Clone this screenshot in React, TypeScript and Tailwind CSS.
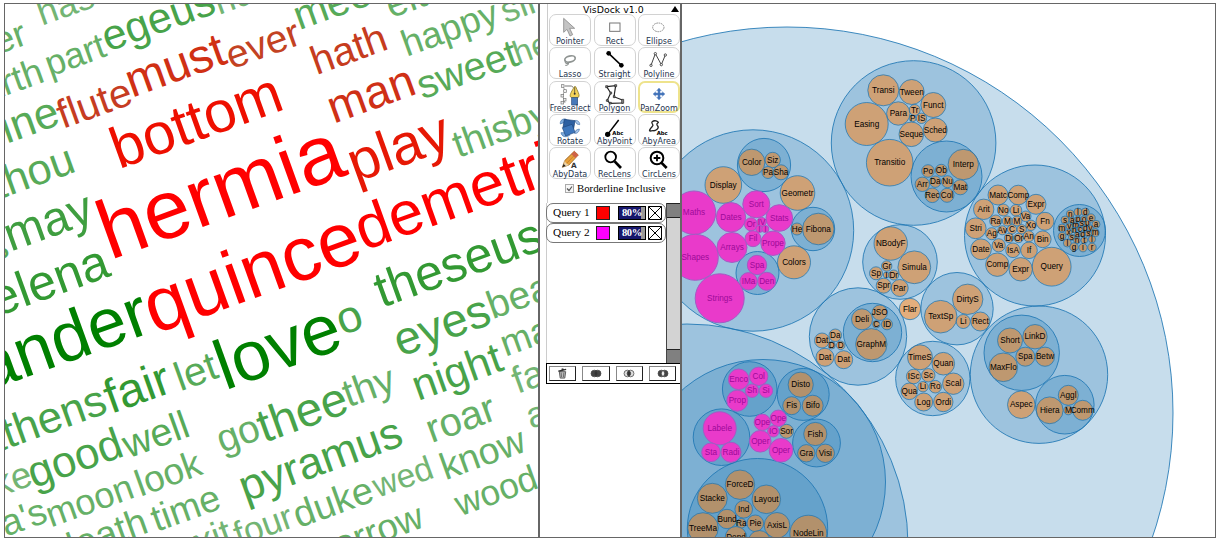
import React from "react";

type Word = [text: string, x: number, y: number, size: number, fill: string];

const R0 = "#ff0000";
const G0 = "#008000";
const G1 = "#339933";
const G2 = "#48a34a";
const G3 = "#57aa58";
const G4 = "#66b067";
const G5 = "#73b574";

const WORDS: Word[] = [
  ["er", -1.8, 54.6, 37, G4],
  ["has", 42.1, 25.8, 36, G5],
  ["earth", -33.3, 109.8, 37, G4],
  ["part", 49.9, 76.7, 36, G4],
  ["egeus", 107.8, 52.1, 43, G2],
  ["nu", 219, 15, 36, G5],
  ["flute", 62.8, 129, 40.5, "#c63c22"],
  ["must", 132, 97.8, 47.6, "#d03014"],
  ["ever", 231.6, 69.4, 39, "#c34222"],
  ["meet", 299.2, 30.2, 41, G3],
  ["either", 391, 18.3, 38, G4],
  ["hath", 316.5, 75.2, 40.1, "#c63c1e"],
  ["happy", 406.7, 56.8, 36.7, G4],
  ["sing", 505.5, 23.2, 36, G5],
  ["sweet", 422.6, 99.6, 39.8, G3],
  ["hear", 517.7, 64.8, 33, G5],
  ["bottom", 119.1, 169.2, 58.2, "#ee0f00"],
  ["man", 333.8, 123.8, 46.2, "#cf3016"],
  ["play", 355.6, 182.7, 57, "#e61805"],
  ["thisby", 458.3, 158, 38.5, G4],
  ["line", -2.5, 147, 44, G3],
  ["thou", -1.6, 199.6, 43.2, G3],
  ["s", -6, 262, 36, G3],
  ["may", 10.6, 251.8, 48.2, "#3f9e40"],
  ["hermia", 110, 260.3, 83.3, R0],
  ["helena", -28.8, 326.2, 50, G1],
  ["ander", -13.3, 391.5, 69.5, G0],
  ["quince", 154.3, 334.4, 76.5, R0],
  ["demetrius", 363.6, 251, 62, R0],
  ["theseus", 381.7, 308, 50, G1],
  ["fair", 111, 414.1, 48, G1],
  ["athens", -14.8, 456.8, 44, G2],
  ["let", 180.2, 391.5, 40.5, G3],
  ["love", 224.9, 390.6, 70.2, G0],
  ["o", 342.3, 335.5, 45, G2],
  ["eyes", 400.2, 356.9, 47, G2],
  ["bear", 492.6, 319.2, 39, G4],
  ["good", 33.8, 488.6, 44, G2],
  ["like", -17.6, 503.1, 37, G5],
  ["well", 128.3, 458.4, 39.3, G3],
  ["go", 221.9, 453.1, 39, G4],
  ["thee", 264, 442.9, 47.5, G2],
  ["thy", 348.3, 407.6, 39.5, G4],
  ["night", 418, 401, 42.8, G2],
  ["make", 505.4, 356.8, 37, G4],
  ["father", 517.6, 394, 38, G5],
  ["as", 531, 429, 36, G5],
  ["roar", 431.5, 443.2, 40, G4],
  ["pyramus", 245.2, 502.2, 44.4, G2],
  ["duke", 298.5, 528.3, 38, G4],
  ["four", 238.8, 546.7, 35, G5],
  ["wed", 377.5, 498, 33.7, G5],
  ["know", 445.4, 480.2, 37.6, G4],
  ["wood", 460, 516.4, 35.7, G4],
  ["morrow", 309.9, 568.2, 37, G4],
  ["moon", 51, 527.5, 36.2, G4],
  ["look", 140.4, 496.8, 37, G4],
  ["a's", 6, 536.8, 37, G4],
  ["time", 156.5, 532, 37.5, G4],
  ["death", 60.7, 564, 38, G4],
  ["exit", 179, 563, 38, G5],
];

function WordCloud() {
  return (
    <svg width="533" height="533" viewBox="5 4 533 533" className="block font-['Liberation_Sans',sans-serif]">
      {WORDS.map(([text, x, y, size, fill], i) => (
        <text key={i} transform={`translate(${x} ${y}) rotate(-19.8)`} fontSize={size} fill={fill}>
          {text}
        </text>
      ))}
    </svg>
  );
}

type Ring = [x: number, y: number, r: number];
type Leaf = [label: string, x: number, y: number, r: number];

const RINGS: Ring[] = [
  [787, 413, 386],
  [753, 230.5, 100.7],
  [687, 545, 221],
  [763, 482, 122.5],
  [913.6, 143, 82.3],
  [946.5, 176.5, 35.5],
  [1035, 235.5, 70.5],
  [1079.5, 230.5, 26],
  [900, 262, 37.3],
  [957, 308.7, 36.2],
  [858, 336.5, 48.7],
  [872.5, 332.5, 29.2],
  [932.8, 378.5, 37.2],
  [1039, 374.7, 68.7],
  [1021.7, 352.8, 37.7],
  [1064.8, 404.7, 29.3],
  [764, 165, 26.6],
  [813, 229, 21.7],
  [757.5, 273, 21.5],
  [749.7, 389, 27.3],
  [803.2, 394.4, 26],
  [721.5, 437.2, 28.3],
  [816.5, 443, 23.9],
  [757.5, 528.7, 70.2],
];

const LEAVES: Leaf[] = [
  ["Color", 751.7, 162.3, 13.2], ["Siz", 772.7, 160, 7.7], ["Pa", 768, 172.5, 6], ["Sha", 781, 172.3, 7.5],
  ["Display", 723.3, 185, 18.3], ["Geometr", 797.5, 193, 17.3], ["He", 797, 229, 6], ["Fibona", 818.3, 229, 15.8],
  ["Colors", 794, 262.3, 16.5], ["Disto", 800.7, 384.7, 12.6], ["Fis", 791.7, 405.7, 9], ["Bifo", 812.7, 405.7, 10.5],
  ["Sor", 786.5, 431.3, 7], ["Fish", 815.3, 434, 11.6], ["Gra", 806.3, 453.3, 8.7], ["Visi", 825.3, 453.3, 9.2],
  ["ForceD", 740, 484.7, 14.7], ["Stacke", 712.3, 498.3, 15], ["Layout", 766.3, 499.3, 14.3], ["Ind", 743.7, 509.3, 8.8],
  ["TreeMa", 703, 528, 15.3], ["Bund", 727, 519, 9.7], ["Ra", 741.3, 523.3, 4.8], ["Pie", 755.3, 523.3, 8.3],
  ["AxisL", 777, 525.3, 12.8], ["NodeLin", 808.3, 533.7, 18.5], ["Dend", 736, 537.3, 10.8], ["", 759.3, 541.5, 11],
  ["Transi", 883.3, 90.3, 15.5], ["Tween", 911.7, 92, 12.5], ["Funct", 933.3, 105, 12.5], ["Para", 898.3, 113.5, 11.7],
  ["Tr", 914.7, 110, 5.5], ["P", 912.7, 118.5, 3.3], ["IS", 921.5, 118.3, 5.2], ["Easing", 866.7, 124, 21.5],
  ["Seque", 911.3, 134.3, 12.3], ["Sched", 935.3, 130, 12], ["Transitio", 889.7, 162.7, 23.3], ["Interp", 963.3, 164.5, 15.2],
  ["Po", 928, 171, 6.3], ["Ob", 941.3, 170.3, 6], ["Arr", 922.3, 184.3, 7.2], ["Da", 935.3, 181.7, 5.7],
  ["Nu", 947.5, 181.7, 6], ["Mat", 960.3, 187.3, 7.5], ["Rec", 932.3, 195.3, 7.3], ["Col", 947, 195.3, 7],
  ["NBodyF", 890.7, 243.5, 16.7], ["Simula", 914.3, 267.3, 16.4], ["Gr", 886.7, 266, 5.2], ["Sp", 876, 273.3, 6.5],
  ["I", 886.3, 275, 3], ["Dr", 893.7, 275, 5], ["Spr", 883.7, 285.7, 7.5], ["Par", 899.7, 288, 8.5],
  ["Flar", 910, 309, 10.7], ["DirtyS", 967.7, 299.3, 15.2], ["TextSp", 940.7, 316.7, 16.3], ["Li", 963.3, 321.5, 7],
  ["Rect", 980.3, 321.5, 9.5], ["Deli", 862, 319.3, 10.5], ["JSO", 879.7, 312.7, 7.7], ["C", 876.3, 324.3, 3.7],
  ["ID", 887, 324.3, 5.5], ["GraphM", 871.3, 344.3, 15.7], ["Dat", 822, 340.5, 7.5], ["Da", 835.3, 335.3, 6.3],
  ["D", 831.7, 345.3, 3.7], ["D", 840.7, 345.3, 4.3], ["Dat", 825, 357.3, 9], ["Dat", 843.7, 359.7, 9],
  ["TimeS", 920, 357.3, 12.5], ["Quan", 943.3, 363.7, 11.3], ["ISc", 913.7, 376.5, 7.3], ["Sc", 928.3, 375.3, 6.7],
  ["Scal", 953.3, 383.7, 10.7], ["Li", 923, 386.7, 5.2], ["Ro", 935.3, 386.7, 6.3], ["Qua", 909.3, 391.3, 8.3],
  ["Log", 923.7, 402, 9], ["Ordi", 943.3, 402, 9.7],
  ["Matc", 998, 195, 10], ["Comp", 1018.3, 195, 9.8], ["Expr", 1036, 204.3, 10], ["Arit", 983.7, 209.3, 10.2],
  ["No", 1003.3, 210, 6], ["Li", 1016, 210.3, 5.8], ["Va", 1025.7, 216.3, 5.3], ["Fn", 1045, 221.3, 9],
  ["Ra", 995.7, 221, 6], ["M", 1007.3, 221, 5], ["M", 1017, 221, 5], ["Xo", 1031, 225.3, 5.2],
  ["Stri", 975.7, 228.3, 10.4], ["Ag", 991.7, 233.7, 6], ["Av", 1002.3, 230.3, 4.5], ["C", 1012, 229.3, 4.7],
  ["S", 1021.7, 229.3, 4.7], ["Di", 1009, 238, 4.7], ["Or", 1018.7, 238, 4.7], ["An", 1028.7, 236.3, 5.5],
  ["Bin", 1042.7, 239.3, 8.4], ["Date", 981, 249.3, 10.4], ["Va", 998.7, 245.3, 6.6], ["IsA", 1013, 250.3, 7.3],
  ["If", 1029, 250.3, 8.3], ["Comp", 997.3, 264.7, 11.7], ["Expr", 1020.7, 269.3, 11.7], ["Query", 1051.7, 266.7, 19.4],
  ["n", 1070.3, 214, 4], ["l", 1078, 212, 4], ["d", 1085.3, 212, 4], ["s", 1065, 220, 4],
  ["a", 1072.3, 220.3, 3.2], ["p", 1078, 219, 3], ["o", 1084, 219, 3.2], ["e", 1091, 218, 4.2],
  ["m", 1062, 228, 4], ["v", 1069.3, 226.3, 3.2], ["m", 1075.7, 225, 2.8], ["s", 1081.7, 223.7, 2.8],
  ["u", 1087.3, 223.3, 3], ["a", 1096, 224.3, 4], ["x", 1068.7, 232.3, 3.2], ["n", 1074.3, 230, 2.6],
  ["c", 1080, 229, 2.6], ["d", 1085.3, 228.3, 2.8], ["y", 1090.3, 228, 3], ["m", 1095.3, 232.7, 4],
  ["g", 1062, 236.3, 4], ["s", 1071.7, 237.3, 3.2], ["a", 1077.3, 234.7, 2.8], ["d", 1082.7, 234.3, 2.8],
  ["s", 1088.3, 233.7, 3.2], ["l", 1067.3, 243, 4], ["n", 1077, 240.3, 3.4], ["t", 1084.3, 240.3, 3.4],
  ["l", 1092, 239.3, 3.6], ["g", 1074, 247, 4.2], ["i", 1083, 247.7, 4.2], ["r", 1092, 247.3, 4.2],
  ["Short", 1010, 340.5, 12.5], ["LinkD", 1035, 336.7, 12.2], ["Spa", 1025.3, 356.7, 9.5], ["Betw", 1045, 356.7, 9.6],
  ["MaxFlo", 1003.3, 367.3, 14.3], ["Aspec", 1021.3, 404.7, 13.8], ["Aggl", 1068.3, 395.3, 10],
  ["Hiera", 1049.7, 410.3, 13.4], ["M", 1068.3, 410.3, 4.5], ["Comm", 1082.7, 410.3, 10],
];

const SELECTED: Leaf[] = [
  ["Maths", 694, 212.7, 21.7], ["Dates", 731, 217.3, 14.7], ["Sort", 756.3, 204.3, 13.5], ["Stats", 779.3, 218, 13.3],
  ["Or", 751, 224.3, 6.5], ["IV", 761.7, 222, 4.6], ["I", 759.3, 229, 3.6], ["I", 765.3, 229, 3.6],
  ["Fil", 753, 238.7, 8], ["Prope", 773, 243.3, 12.2], ["Arrays", 732, 247.5, 15], ["Shapes", 695.3, 257.3, 23],
  ["Strings", 719.7, 298.3, 24.5], ["Spa", 757, 265, 9.7], ["IMa", 748.5, 281.3, 8.7], ["Den", 766.7, 281.3, 9],
  ["Enco", 738.7, 379.3, 10.3], ["Col", 758.7, 376.3, 9.2], ["Sh", 752, 390.7, 6.7], ["Si", 766, 390.7, 6.7],
  ["Prop", 737.3, 400.7, 10.5], ["Labele", 719.7, 428.3, 16.5], ["Sta", 711, 452.3, 9.3], ["Radi", 731, 452.3, 10],
  ["Ope", 762.3, 422.3, 8.2], ["Ope", 778.3, 418.3, 8.2], ["IO", 773.3, 431.3, 5.7], ["Oper", 760.3, 441.3, 10.8],
  ["Oper", 781, 450.3, 11.8],
];

function CirclePack() {
  return (
    <svg
      width="533"
      height="533"
      viewBox="682 4 533 533"
      className="block font-['Liberation_Sans',sans-serif] text-[8.2px]"
      textAnchor="middle"
    >
      <g fill="#1f77b4" fillOpacity="0.25" stroke="#1f77b4" strokeOpacity="0.85">
        {RINGS.map(([x, y, r], i) => (
          <circle key={i} cx={x} cy={y} r={r} />
        ))}
      </g>
      {LEAVES.map(([label, x, y, r], i) => (
        <g key={i}>
          <circle cx={x} cy={y} r={r} fill="#ff7f0e" fillOpacity="0.5" stroke="#1f77b4" strokeOpacity="0.75" />
          <text x={x} y={y + 2.7}>{label}</text>
        </g>
      ))}
      {SELECTED.map(([label, x, y, r], i) => (
        <g key={i}>
          <circle cx={x} cy={y} r={r} fill="#e93aca" stroke="#a45ac4" />
          <text x={x} y={y + 2.7} fill="#9c0a98">{label}</text>
        </g>
      ))}
    </svg>
  );
}

/* Tool glyphs share a 126 x 84 canvas, three units to the pixel. */
const ICONS: Record<string, React.ReactNode> = {
  Pointer: (
    <path d="M44 13v42l10-9 9 20 8-4-9-19h15z" fill="#c4c4c4" stroke="#8d8d8d" strokeWidth="2.5" />
  ),
  Rect: <rect x="47" y="27" width="31" height="25" fill="#fff" stroke="#777" strokeWidth="3" />,
  Ellipse: <ellipse cx="61" cy="40" rx="17" ry="13" fill="#fff" stroke="#777" strokeWidth="2.5" strokeDasharray="5 2" />,
  Lasso: (
    <g fill="none" stroke="#8f9492">
      <ellipse cx="63" cy="36" rx="16" ry="9" strokeWidth="5" transform="rotate(-14 63 36)" />
      <path d="M49 42c-2 8 6 9 10 5 0 6-6 9-10 8" strokeWidth="3.5" />
    </g>
  ),
  Straight: (
    <g>
      <path d="M44 19L82 55" stroke="#000" strokeWidth="4.5" />
      <circle cx="44" cy="19" r="7" />
      <circle cx="82" cy="55" r="7" />
    </g>
  ),
  Polyline: (
    <g fill="#fff" stroke="#333" strokeWidth="2.5">
      <path d="M39 55L52 20L70 53L82 24" fill="none" stroke="#444" strokeWidth="3" />
      <circle cx="39" cy="55" r="3.5" />
      <circle cx="52" cy="20" r="3.5" />
      <circle cx="70" cy="53" r="3.5" />
      <circle cx="82" cy="24" r="3.5" />
    </g>
  ),
  Freeselect: (
    <g>
      <path d="M41 15L49 30L40 42L48 66" fill="none" stroke="#777" strokeWidth="2" />
      <g fill="#eee" stroke="#777" strokeWidth="2">
        <rect x="37" y="11" width="8" height="8" />
        <rect x="44" y="26" width="8" height="8" />
        <rect x="36" y="40" width="8" height="8" />
        <rect x="43" y="52" width="8" height="8" />
        <rect x="36" y="61" width="8" height="8" />
      </g>
      <path d="M47 15h20l6 4" fill="none" stroke="#777" strokeWidth="3" />
      <path d="M76 17c-7 13-14 22-12 30l6 4h14l6-4c2-8-5-17-10-30z" fill="#f2d259" stroke="#8b7828" strokeWidth="2.5" />
      <path d="M77 19v18" stroke="#333" strokeWidth="2" />
      <circle cx="77" cy="38" r="3" fill="#333" />
      <rect x="68" y="50" width="18" height="22" fill="#4779b9" stroke="#294c7c" strokeWidth="2" />
    </g>
  ),
  Polygon: (
    <g fill="none" stroke="#222" strokeWidth="3.5">
      <path d="M38 17L65 14L60 47L85 57M38 17L50 36L40 58L48 67L87 66" />
      <path d="M35 14h6v6h-6zM62 11h6v6h-6zM48 33h5v6h-5zM58 44h5v6h-5zM37 56h6v5h-6zM46 64h6v5h-6zM83 55h6v12h-6z" fill="#888" strokeWidth="2" />
    </g>
  ),
  PanZoom: (
    <path
      d="M63 21l7 8h-4v7h7v-4l8 7-8 7v-4h-7v7h4l-7 8-7-8h4v-7h-7v4l-8-7 8-7v4h7v-7h-4z"
      fill="#3f70b7"
      stroke="#6c93cb"
      strokeWidth="1.5"
    />
  ),
  Rotate: (
    <g>
      <path d="M34 30c-2-12 10-18 18-14l-8 10zM36 56c2 12 14 16 26 8l-8-8z" fill="#7eabdc" stroke="#4272ac" strokeWidth="2" />
      <path d="M77 20c8-3 16 4 15 12l-8-2zM76 58c8 2 15-5 15-13l-9 3z" fill="#a9c6ea" stroke="#4272ac" strokeWidth="2" />
      <path d="M46 16l32 4-4 24-32-4z" fill="#2d60a2" stroke="#173e74" strokeWidth="2" />
      <path d="M40 41l29-10 9 24-28 11z" fill="#3e77bd" stroke="#20477c" strokeWidth="2" />
    </g>
  ),
  AbyPoint: (
    <g>
      <path d="M41 61L74 18" stroke="#000" strokeWidth="4.5" />
      <circle cx="41" cy="61" r="8" />
      <text x="55" y="63" fontSize="16" fontWeight="700" className="font-['DejaVu_Sans',sans-serif]">Abc</text>
    </g>
  ),
  AbyArea: (
    <g>
      <path
        d="M42 24c8-8 18-1 19 1s-7 3-4 8 7 7 1 12-7 6-12 5-15 5-10-4 12-10 8-15-4-5-2-7z"
        fill="none"
        stroke="#222"
        strokeWidth="4"
      />
      <text x="56" y="63" fontSize="16" fontWeight="700" className="font-['DejaVu_Sans',sans-serif]">Abc</text>
    </g>
  ),
  AbyData: (
    <g>
      <path d="M40 61l7-20 29-28 12 11-28 30z" fill="#e7a03a" stroke="#8f6329" strokeWidth="2" />
      <path d="M67 21l9-8 12 11-9 9z" fill="#d2604c" />
      <path d="M47 41l29-28M54 48l28-29" stroke="#b8752e" strokeWidth="2" />
      <path d="M47 41l4 8 9 5-16 5z" fill="#ecd6ae" />
      <path d="M40 61l4-10 6 6z" fill="#222" />
      <text x="66" y="63" fontSize="22" fontWeight="700" fill="#333" className="font-['DejaVu_Sans',sans-serif]">A</text>
    </g>
  ),
  RecLens: (
    <g fill="none" stroke="#000">
      <circle cx="50" cy="30" r="16" strokeWidth="5.5" />
      <path d="M62 43L81 63" strokeWidth="8" />
    </g>
  ),
  CircLens: (
    <g fill="none" stroke="#000">
      <circle cx="57" cy="33" r="19" strokeWidth="6" />
      <path d="M57 23v20M47 33h20" strokeWidth="5.5" />
      <path d="M70 47L86 63" strokeWidth="8" />
    </g>
  ),
};

const TOOLS = [
  "Pointer", "Rect", "Ellipse", "Lasso", "Straight", "Polyline", "Freeselect", "Polygon",
  "PanZoom", "Rotate", "AbyPoint", "AbyArea", "AbyData", "RecLens", "CircLens",
];

function Tool({ name }: { name: string }) {
  const selected = name === "PanZoom";
  const border = selected ? "border-2 border-[#eee38c]" : "border border-[#d2d2d2]";
  const icon = selected ? "-left-[2px] -top-[2px]" : "-left-px -top-px";
  const label = selected ? "inset-x-[-5px] bottom-[-3px]" : "inset-x-[-4px] bottom-[-2px]";
  return (
    <div className={`relative h-[32px] w-[42px] rounded-[7px] bg-white ${border}`}>
      <svg viewBox="0 0 126 84" className={`absolute h-[28px] w-[42px] ${icon}`}>
        {ICONS[name]}
      </svg>
      <span className={`absolute text-center font-['DejaVu_Sans',sans-serif] text-[8px] leading-[10px] text-[#25344e] ${label}`}>
        {name}
      </span>
    </div>
  );
}

function Query({ name, swatch }: { name: string; swatch: string }) {
  return (
    <div className="flex h-[20px] w-[120px] items-center rounded-[7px] border border-[#777] bg-white pl-[6px]">
      <span className="w-[43px] whitespace-nowrap font-['Liberation_Serif',serif] text-[11.3px] leading-none">{name}</span>
      <span className={`h-[14px] w-[14px] border border-[#222] ${swatch}`} />
      <span className="ml-[8px] flex h-[14px] w-[28px] items-center border border-black bg-[linear-gradient(to_right,#17176c_22px,#999_22px)] pl-[3px] font-['Liberation_Serif',serif] text-[10.5px] font-bold leading-none tracking-[-0.4px] text-white">
        80%
      </span>
      <svg viewBox="0 0 14 14" className="ml-[2px] h-[14px] w-[14px]">
        <path d="M.5.5h13v13H.5zM.5.5l13 13M13.5.5l-13 13" fill="#fff" stroke="#000" />
      </svg>
    </div>
  );
}

function SetGlyph({ kind }: { kind: number }) {
  if (kind === 0) {
    return (
      <svg viewBox="0 0 12 12" className="h-[11px] w-[11px]" fill="none" stroke="#555">
        <path d="M2.5 4l1 7h5l1-7z" fill="#bbb" />
        <path d="M4.5 5l.5 5M7.5 5L7 10" stroke="#666" />
        <path d="M1.5 3.5L10 1.5M5 1.5l2-.5" strokeWidth="1.6" stroke="#333" />
      </svg>
    );
  }
  const side = kind === 2 ? "#ddd" : "#444";
  const lens = kind === 3 ? "#eee" : "#333";
  return (
    <svg viewBox="0 0 12 10" className="h-[9px] w-[12px]" stroke="#444" strokeWidth=".8">
      <circle cx="4.2" cy="5" r="3.7" fill={side} />
      <circle cx="7.8" cy="5" r="3.7" fill={side} />
      <path d="M6 1.8a3.7 3.7 0 0 1 0 6.4a3.7 3.7 0 0 1 0-6.4z" fill={lens} />
    </svg>
  );
}

function Dock() {
  return (
    <div className="flex w-[140px] flex-col border-y border-[#666] bg-white pl-[6px]">
      <div className="ml-px flex h-[199px] flex-col border-l border-[#ccc]">
        <div className="flex h-[10px] items-center justify-between pl-[35px] pr-px">
          <span className="whitespace-nowrap pt-[2px] font-['DejaVu_Sans',sans-serif] text-[9.4px] leading-none">
            VisDock v1.0
          </span>
          <svg viewBox="0 0 8 6" className="h-[6px] w-[8px]">
            <path d="M0 6L4 0l4 6z" />
          </svg>
        </div>
        <div className="grid grid-cols-[42px_42px_42px] gap-x-[2.5px] gap-y-[1.3px] pl-px">
          {TOOLS.map((name) => (
            <Tool key={name} name={name} />
          ))}
        </div>
        <div className="mt-px flex h-[16px] items-center pl-[17px]">
          <svg viewBox="0 0 9 9" className="h-[9px] w-[9px]">
            <rect x=".5" y=".5" width="8" height="8" fill="#f6f6f6" stroke="#aaa" />
            <path d="M2 4.5l2 2 3-4" fill="none" stroke="#555" strokeWidth="1.2" />
          </svg>
          <span className="ml-[3px] whitespace-nowrap font-['Liberation_Serif',serif] text-[10.8px] leading-none">
            Borderline Inclusive
          </span>
        </div>
      </div>
      <div className="flex h-[160px]">
        <div className="flex w-[120px] flex-col border-l border-[#ccc]">
          <div className="-ml-px">
            <Query name="Query 1" swatch="bg-[#ff0000]" />
            <Query name="Query 2" swatch="bg-[#ff00ff]" />
          </div>
        </div>
        <div className="flex w-[14px] flex-col justify-between border-l border-[#444] bg-[#d3d3d3]">
          <div className="h-[15px] border-y border-[#222] bg-[#808080]" />
          <div className="h-[14px] border-t border-[#222] bg-[#808080]" />
        </div>
      </div>
      <div className="flex h-[21px] items-center gap-[6px] border border-r-0 border-black pl-[2px]">
        {[0, 1, 2, 3].map((kind) => (
          <div
            key={kind}
            className="flex h-[15px] w-[27.3px] items-center justify-center border border-b-[#222] border-l-[#888] border-r-[#222] border-t-[#888] bg-white"
          >
            <SetGlyph kind={kind} />
          </div>
        ))}
      </div>
    </div>
  );
}

export default function App() {
  return (
    <div className="flex h-[543px] w-[1219px] items-start overflow-hidden bg-white pl-[4px] pt-[3px] text-black">
      <div className="h-[535px] w-[536px] shrink-0 overflow-hidden border border-r-2 border-[#666]">
        <WordCloud />
      </div>
      <div className="flex h-[535px] shrink-0">
        <Dock />
      </div>
      <div className="h-[535px] w-[536px] shrink-0 overflow-hidden border border-l-2 border-[#666]">
        <CirclePack />
      </div>
    </div>
  );
}
